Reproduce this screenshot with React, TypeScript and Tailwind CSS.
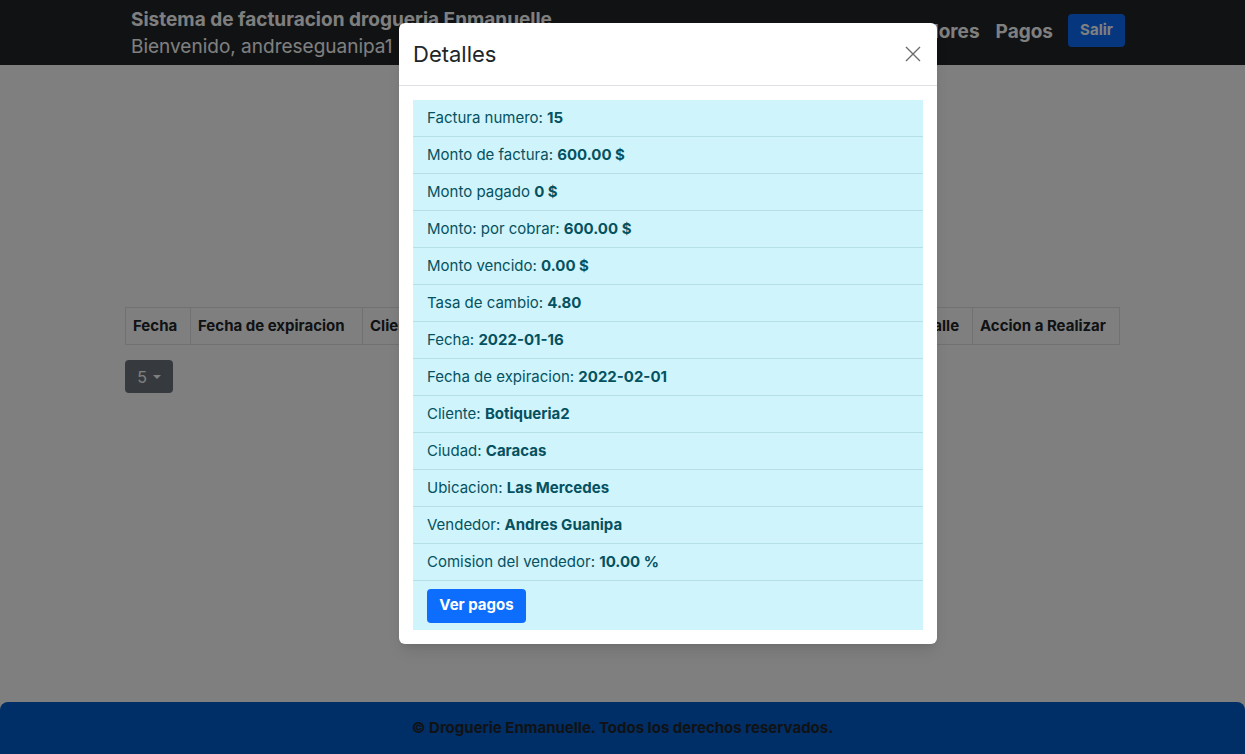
import React from "react";

const rows: [string, string][] = [
  ["Factura numero: ", "15"],
  ["Monto de factura: ", "600.00 $"],
  ["Monto pagado ", "0 $"],
  ["Monto: por cobrar: ", "600.00 $"],
  ["Monto vencido: ", "0.00 $"],
  ["Tasa de cambio: ", "4.80"],
  ["Fecha: ", "2022-01-16"],
  ["Fecha de expiracion: ", "2022-02-01"],
  ["Cliente: ", "Botiqueria2"],
  ["Ciudad: ", "Caracas"],
  ["Ubicacion: ", "Las Mercedes"],
  ["Vendedor: ", "Andres Guanipa"],
  ["Comision del vendedor: ", "10.00 %"],
];

const cols: [string, string][] = [
  ["Fecha", "w-[64px]"],
  ["Fecha de expiracion", "w-[172px]"],
  ["Cliente", "w-[110px]"],
  ["Vendedor", "w-[110px]"],
  ["Monto", "w-[110px]"],
  ["Estado", "w-[110px]"],
  ["Total", "w-[98px]"],
  ["Detalle", "w-[72px]"],
  ["Accion a Realizar", "flex-1"],
];

export default function App() {
  return (
    <div
      className="relative min-h-[754px] w-full bg-white text-[#212529]"
      style={{ fontFamily: "Inter, 'Noto Sans', sans-serif" }}
    >
      <div className="flex min-h-[754px] flex-col">
        <nav className="h-[65px] bg-[#212529]">
          <div className="mx-auto flex h-full w-[995px] items-center justify-between pl-[6px]">
            <div className="flex flex-col leading-[27px]">
              <span className="whitespace-nowrap text-[19px] font-bold text-white">Sistema de facturacion drogueria Enmanuelle</span>
              <span className="whitespace-nowrap text-[19px] text-white">Bienvenido, andreseguanipa1</span>
            </div>
            <div className="mr-[-5px] flex items-center gap-[16px]">
              <span className="text-[19px] font-bold text-white">Clientes</span>
              <span className="text-[19px] font-bold text-white">Vendedores</span>
              <span className="text-[19px] font-bold text-white">Pagos</span>
              <button className="mb-[4px] ml-[-1px] h-[33px] w-[57px] rounded-[4px] bg-[#0d6efd] text-[15px] font-bold text-white">
                Salir
              </button>
            </div>
          </div>
        </nav>
        <main className="flex-1">
          <div className="mx-auto w-[995px] pt-[242px]">
            <div className="flex border border-[#dee2e6]">
              {cols.map(([c, w], i) => (
                <div
                  key={c}
                  className={`${w} ${i > 0 ? "border-l border-[#dee2e6]" : ""} flex h-[36px] items-center overflow-hidden whitespace-nowrap px-[7px] text-[15px] font-bold`}
                >
                  {c}
                </div>
              ))}
            </div>
            <button className="mt-[15px] flex h-[33px] w-[48px] items-center justify-center gap-[6px] rounded-[4px] bg-[#6c757d] text-[16px] text-white">
              5
              <span className="h-0 w-0 border-x-[4px] border-t-[4px] border-x-transparent border-t-white" />
            </button>
          </div>
        </main>
        <footer className="flex h-[52px] items-center justify-center rounded-t-[8px] bg-[#005ccd]">
          <span className="text-[15px] font-bold text-[#212529]">© Droguerie Enmanuelle. Todos los derechos reservados.</span>
        </footer>
      </div>

      <div className="absolute inset-0 bg-black/50" />

      <div className="absolute left-[399px] top-[23px] w-[538px] rounded-[6px] bg-white shadow-lg">
        <div className="flex h-[63px] items-center justify-between border-b border-[#dee2e6] px-[14px]">
          <span className="text-[22px] text-[#212529]">Detalles</span>
          <svg width="16" height="16" viewBox="0 0 16 16" className="mr-[2px]">
            <path d="M1 1L15 15M15 1L1 15" stroke="#6c6c6c" strokeWidth="1.4" />
          </svg>
        </div>
        <div className="p-[14px]">
          <div className="bg-[#cff4fc]">
            {rows.map(([l, v]) => (
              <div key={l} className="flex h-[37px] items-center border-b border-[#b6dfe8] px-[14px] text-[15px] text-[#055160]">
                <span className="whitespace-pre">{l}</span>
                <span className="font-bold">{v}</span>
              </div>
            ))}
            <div className="flex h-[49px] items-center px-[14px]">
              <button className="h-[34px] w-[99px] rounded-[4px] bg-[#0d6efd] text-[15px] font-bold text-white">
                Ver pagos
              </button>
            </div>
          </div>
        </div>
      </div>
    </div>
  );
}
